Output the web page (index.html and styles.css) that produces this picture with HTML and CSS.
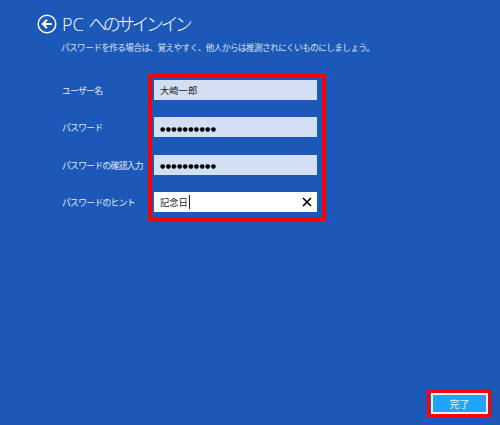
FILE: index.html
```html
<!DOCTYPE html>
<html lang="ja">
<head>
<meta charset="UTF-8">
<meta name="viewport" content="width=device-width, initial-scale=1.0">
<title>PC へのサインイン</title>
<link rel="stylesheet" href="styles.css">
</head>
<body>
    <div class="page">
        <div class="header">
            <svg class="back-icon" viewBox="0 0 20 20" width="20" height="20">
                <circle cx="10" cy="10" r="8.8" fill="none" stroke="#fff" stroke-width="1.5"/>
                <path d="M15 10H6.5M10 5.8L5.8 10l4.2 4.2" fill="none" stroke="#fff" stroke-width="2"/>
            </svg>
            <h1 class="title">PC <span class="title-kana">へのサインイン</span></h1>
        </div>
        <p class="lead">パスワードを作る場合は、覚えやすく、他人からは推測されにくいものにしましょう。</p>

        <div class="form">
            <div class="labels">
                <span class="label">ユーザー名</span>
                <span class="label">パスワード</span>
                <span class="label">パスワードの確認入力</span>
                <span class="label">パスワードのヒント</span>
            </div>
            <div class="fields">
                <div class="field">大崎一郎</div>
                <div class="field field-password">●●●●●●●●●●</div>
                <div class="field field-password">●●●●●●●●●●</div>
                <div class="field field-active">
                    <span class="hint-text">記念日</span>
                    <svg class="clear-icon" viewBox="0 0 10 10" width="10" height="10">
                        <path d="M1 1L9 9M9 1L1 9" stroke="#000" stroke-width="1.7"/>
                    </svg>
                </div>
            </div>
        </div>

        <div class="footer">
            <div class="done-frame">
                <button class="done-button">完了</button>
            </div>
        </div>
    </div>
</body>
</html>
```

FILE: styles.css
```css
* {
    box-sizing: border-box;
}
body {
    margin: 0;
    background: #1b58b8;
    color: #fff;
    font-family: "Noto Sans CJK JP", "Liberation Sans", sans-serif;
}
.page {
    display: flex;
    flex-direction: column;
    height: 425px;
    padding: 14px 9px 8px 37px;
}

/* ヘッダー */
.header {
    display: flex;
    align-items: center;
    gap: 5px;
    height: 20px;
}
.back-icon {
    flex: none;
}
.title {
    margin: 0;
    font-family: "Open Sans", "Noto Sans CJK JP", sans-serif;
    font-size: 18px;
    font-weight: 300;
    line-height: 20px;
    white-space: nowrap;
}
.title-kana {
    letter-spacing: -3.6px;
}
.lead {
    margin: 6px 0 0 24px;
    font-size: 8.6px;
    letter-spacing: -0.55px;
    line-height: 14px;
    color: #dbe5f5;
    white-space: nowrap;
}

/* 入力フォーム */
.form {
    display: flex;
    margin-top: 20px;
    margin-left: 24px;
}
.labels {
    display: flex;
    flex-direction: column;
    gap: 17.3px;
    width: 87px;
    padding-top: 7px;
    padding-left: 1px;
}
.label {
    height: 20px;
    font-size: 8.8px;
    letter-spacing: -0.7px;
    line-height: 20px;
    color: #e3ebf8;
    white-space: nowrap;
}
.fields {
    display: flex;
    flex-direction: column;
    gap: 17.3px;
    width: 178px;
    padding: 2px 5px 5px 2px;
    border: 4px solid #f00;
}
.field {
    display: flex;
    align-items: center;
    width: 163px;
    height: 20px;
    padding: 0 5px 0 6px;
    background: #d3dff3;
    font-size: 9.3px;
    color: #222;
}
.field-password {
    padding-top: 2px;
    font-family: "DejaVu Sans", sans-serif;
    font-size: 6px;
    letter-spacing: 0.4px;
    color: #000;
}
.field-active {
    justify-content: space-between;
    background: #fff;
}
.hint-text {
    padding-right: 1px;
    border-right: 1px solid #222;
    line-height: 14px;
}

/* 完了ボタン */
.footer {
    display: flex;
    justify-content: flex-end;
    margin-top: auto;
}
.done-frame {
    padding-left: 1px;
    border: 3px solid #f00;
}
.done-button {
    display: block;
    width: 57px;
    height: 21px;
    padding: 0;
    border: 2px solid #e8f1fb;
    background: #22a3f5;
    color: #eaf4fd;
    font-family: inherit;
    font-size: 10px;
    line-height: 14px;
}
```
